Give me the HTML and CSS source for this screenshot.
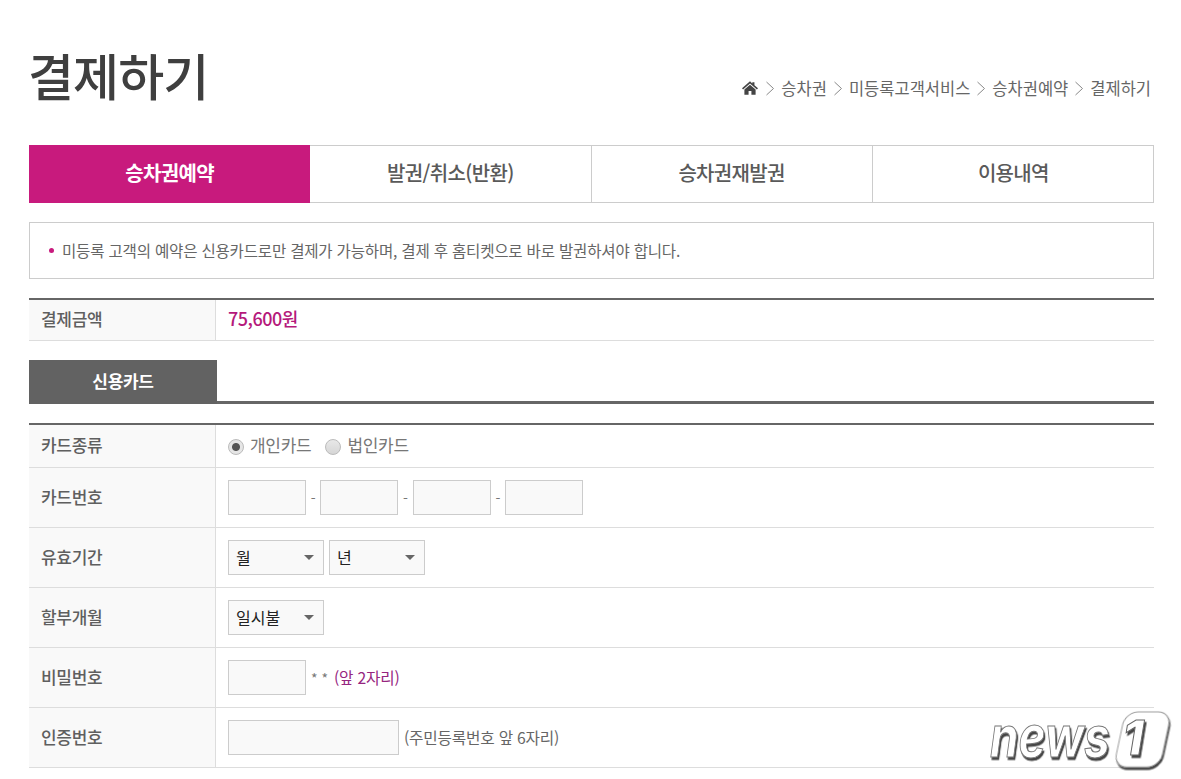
FILE: index.html
```html
<!DOCTYPE html>
<html lang="ko">
<head>
<meta charset="utf-8">
<title>결제하기</title>
<link rel="stylesheet" href="styles.css">
</head>
<body>
<main class="page">
  <header class="head">
    <h1 class="title">결제하기</h1>
    <nav class="crumbs">
      <svg class="home" viewBox="0 0 18 15"><path d="M9 0 L11.6 2.3 V1 H14 V4.4 L18 7.9 L16.8 9.2 L9 2.5 L1.2 9.2 L0 7.9 Z M9 3.9 L15.3 9.2 V15 H10.6 V10.8 H7.4 V15 H2.7 V9.2 Z"/></svg>
      <svg class="chev" viewBox="0 0 8 15"><path d="M0.5 1 L7.5 7.5 L0.5 14"/></svg>
      <span>승차권</span>
      <svg class="chev" viewBox="0 0 8 15"><path d="M0.5 1 L7.5 7.5 L0.5 14"/></svg>
      <span>미등록고객서비스</span>
      <svg class="chev" viewBox="0 0 8 15"><path d="M0.5 1 L7.5 7.5 L0.5 14"/></svg>
      <span>승차권예약</span>
      <svg class="chev" viewBox="0 0 8 15"><path d="M0.5 1 L7.5 7.5 L0.5 14"/></svg>
      <span>결제하기</span>
    </nav>
  </header>

  <div class="tabs">
    <a class="tab active">승차권예약</a>
    <a class="tab">발권/취소(반환)</a>
    <a class="tab">승차권재발권</a>
    <a class="tab">이용내역</a>
  </div>

  <div class="notice"><span class="dot"></span>미등록 고객의 예약은 신용카드로만 결제가 가능하며, 결제 후 홈티켓으로 바로 발권하셔야 합니다.</div>

  <section class="rows amount">
    <div class="row row-amount">
      <div class="label">결제금액</div>
      <div class="value price">75,600원</div>
    </div>
  </section>

  <div class="subtabs"><span class="subtab">신용카드</span></div>

  <section class="rows">
    <div class="row row-first">
      <div class="label">카드종류</div>
      <div class="value">
        <label class="radio"><input type="radio" name="kind" checked>개인카드</label>
        <label class="radio"><input type="radio" name="kind">법인카드</label>
      </div>
    </div>
    <div class="row">
      <div class="label">카드번호</div>
      <div class="value cardno">
        <input class="field w78" type="text"><span class="dash">-</span>
        <input class="field w78" type="text"><span class="dash">-</span>
        <input class="field w78" type="text"><span class="dash">-</span>
        <input class="field w78" type="text">
      </div>
    </div>
    <div class="row">
      <div class="label">유효기간</div>
      <div class="value selects">
        <div class="select"><select><option>월</option></select></div>
        <div class="select"><select><option>년</option></select></div>
      </div>
    </div>
    <div class="row">
      <div class="label">할부개월</div>
      <div class="value">
        <div class="select"><select><option>일시불</option></select></div>
      </div>
    </div>
    <div class="row">
      <div class="label">비밀번호</div>
      <div class="value hinted">
        <input class="field w78" type="password"><span class="stars">* *</span><span class="hint-pink">(앞 2자리)</span>
      </div>
    </div>
    <div class="row">
      <div class="label">인증번호</div>
      <div class="value hinted">
        <input class="field w171" type="text"><span class="hint">(주민등록번호 앞 6자리)</span>
      </div>
    </div>
  </section>
</main>

<svg class="wm" viewBox="0 0 190 64" aria-label="news1">
  <defs>
    <filter id="sh" x="-10%" y="-10%" width="125%" height="130%"><feDropShadow dx="1.5" dy="2.5" stdDeviation="0.4" flood-color="#444"/></filter>
  </defs>
  <text class="wm-news" transform="translate(4 48) scale(0.82 1)" filter="url(#sh)">news</text>
  <rect class="wm-box" x="140" y="3" width="46" height="55" rx="13" transform="skewX(-12)" filter="url(#sh)"/>
  <text class="wm-one" x="147" y="46" text-anchor="middle" filter="url(#sh)">1</text>
</svg>
</body>
</html>
```
FILE: styles.css
```css
* { box-sizing: border-box; }
html, body { margin: 0; padding: 0; background: #fff; }
body {
  font-family: "Noto Sans CJK KR", "Noto Sans", sans-serif;
  color: #555;
  font-size: 15px;
  height: 779px;
  overflow: hidden;
  position: relative;
}
.page { width: 1125px; margin-left: 29px; padding-top: 44px; }

.head { display: flex; justify-content: space-between; align-items: flex-end; height: 101px; padding-bottom: 38px; }
.title { margin: 0 0 0 -1px; font-size: 50px; line-height: 66px; font-weight: 500; color: #3f3f3f; letter-spacing: -0.9px; }
.crumbs { display: flex; align-items: center; gap: 7px; font-size: 16.5px; line-height: 20px; color: #666; padding-right: 3px; margin-bottom: 9px; }
.home { width: 16px; height: 14px; fill: #444; margin-right: 1px; }
.chev { width: 8px; height: 15px; fill: none; stroke: #888; stroke-width: 1; }

.tabs { display: grid; grid-template-columns: repeat(4, 281.25px); height: 58px; border: 1px solid #ccc; border-left: 0; width: 1125px; }
.tab { display: flex; align-items: center; justify-content: center; padding-bottom: 4px; font-size: 20px; font-weight: 500; color: #5a5a5a; border-right: 1px solid #ccc; letter-spacing: -0.65px; }
.tab:last-child { border-right: 0; }
.tab.active { background: #c81a7d; color: #fff; border: 0; margin: -1px 0; font-weight: 700; }

.notice { margin-top: 19px; height: 57px; border: 1px solid #ccc; display: flex; align-items: center; padding: 0 0 2px 19px; font-size: 15.55px; color: #666; letter-spacing: -0.2px; }
.dot { width: 5px; height: 5px; border-radius: 50%; background: #c81a7d; margin-right: 8px; margin-top: 2px; }

.rows { border-top: 2px solid #666; width: 1125px; }
.amount { margin-top: 19px; }
.row { display: flex; height: 60px; border-bottom: 1px solid #ddd; }
.row-amount { height: 41px; }
.row-first { height: 43px; }
.label { width: 187px; flex: none; background: #f9f9f9; border-right: 1px solid #ddd; display: flex; align-items: center; padding: 0 0 3px 12px; font-size: 17px; font-weight: 500; color: #5f5f5f; letter-spacing: -0.3px; }
.value { flex: 1; display: flex; align-items: center; padding-left: 12px; }
.price { font-size: 18px; font-weight: 500; color: #b5197b; letter-spacing: -0.5px; padding-bottom: 4px; }

.subtabs { margin-top: 19px; height: 44px; border-bottom: 3px solid #666; margin-bottom: 19px; }
.subtab { display: flex; align-items: center; justify-content: center; width: 188px; height: 44px; background: #626262; color: #fff; font-size: 17px; font-weight: 700; letter-spacing: -0.3px; padding-bottom: 3px; }

.radio { display: flex; align-items: center; margin-right: 14px; font-size: 17px; color: #777; letter-spacing: -0.3px; padding-bottom: 3px; }
.radio input {
  appearance: none; margin: 4px 6px 0 0; width: 16px; height: 16px; border-radius: 50%;
  border: 1px solid #bbb; background: linear-gradient(#e8e8e8, #d6d6d6);
}
.radio input:checked { background: radial-gradient(circle, #555 0 3.5px, #e6e6e6 4.5px); }

.field { height: 35px; border: 1px solid #ccc; background: #f9f9f9; padding: 0; margin: 0; display: block; }
.w78 { width: 78px; }
.w171 { width: 171px; }
.dash { width: 14.33px; text-align: center; font-size: 14px; color: #777; }

.selects { gap: 5px; }
.select { position: relative; width: 96px; height: 35px; }
.select select {
  appearance: none; width: 100%; height: 100%; border: 1px solid #ccc; background: #f9f9f9;
  padding: 0 0 2px 7px; font-family: inherit; font-size: 16px; color: #222; border-radius: 0;
}
.select::after {
  content: ""; position: absolute; right: 10px; top: 15px; width: 0; height: 0;
  border-left: 5px solid transparent; border-right: 5px solid transparent; border-top: 5px solid #666;
  pointer-events: none;
}

.stars { margin-left: 5px; font-size: 14px; color: #777; margin-right: 6px; }
.hint-pink { font-size: 15.7px; color: #96267f; letter-spacing: -0.2px; padding-bottom: 1px; }
.hint { margin-left: 5px; font-size: 15.7px; color: #666; letter-spacing: -0.2px; padding-bottom: 1px; }

.wm { position: absolute; left: 986px; top: 709px; width: 190px; height: 64px; overflow: visible; }
.wm-news { font-family: Inter, "Liberation Sans", sans-serif; font-style: italic; font-weight: 700; font-size: 56px; fill: #fff; stroke: #777; stroke-width: 1; }
.wm-box { fill: #fff; stroke: #999; stroke-width: 1; }
.wm-one { font-family: Inter, "Liberation Sans", sans-serif; font-style: italic; font-weight: 800; font-size: 48px; fill: #fff; stroke: #666; stroke-width: 1; }
```
